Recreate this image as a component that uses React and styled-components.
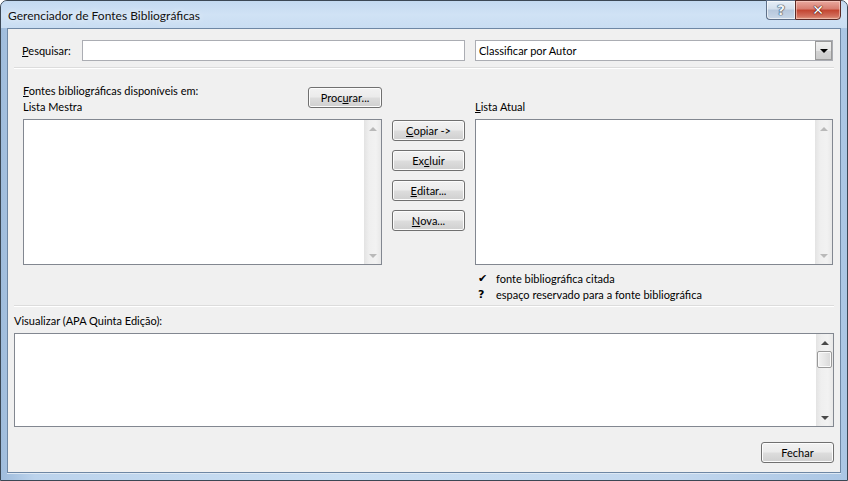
import React from 'react'
import styled, { createGlobalStyle } from 'styled-components'

const GlobalStyle = createGlobalStyle`
    html, body {
        margin: 0;
        padding: 0;
        width: 848px;
        height: 481px;
        overflow: hidden;
        background: #ffffff;
    }
    * {
        box-sizing: border-box;
    }
`

const FONT = `Lato, "Noto Sans", "Liberation Sans", sans-serif`

function App() {
    return (
    <>
        <GlobalStyle />
        <Window>
            <TitleBar>
                <Caption>Gerenciador de Fontes Bibliográficas</Caption>
                <CaptionButtons>
                    <HelpButton>?</HelpButton>
                    <CloseButton>✕</CloseButton>
                </CaptionButtons>
            </TitleBar>
            <Body>
                <SearchRow>
                    <Label><u>P</u>esquisar:</Label>
                    <TextInput />
                    <Combo>
                        <ComboText>Classificar por Autor</ComboText>
                        <ComboButton><Arrow $dir="down" $color="#000" /></ComboButton>
                    </Combo>
                </SearchRow>
                <Separator />
                <Sources>
                    <HeaderLeft>
                        <HeaderText>
                            <Line><u>F</u>ontes bibliográficas disponíveis em:</Line>
                            <Line>Lista Mestra</Line>
                        </HeaderText>
                        <Button $w={74} $top={4}>Proc<u>u</u>rar...</Button>
                    </HeaderLeft>
                    <div />
                    <HeaderRight>
                        <Line><u>L</u>ista Atual</Line>
                    </HeaderRight>

                    <ListBox>
                        <ScrollBar />
                    </ListBox>
                    <ButtonColumn>
                        <Button><u>C</u>opiar -&gt;</Button>
                        <Button>Ex<u>c</u>luir</Button>
                        <Button><u>E</u>ditar...</Button>
                        <Button><u>N</u>ova...</Button>
                    </ButtonColumn>
                    <ListBox>
                        <ScrollBar />
                    </ListBox>

                    <div />
                    <div />
                    <Legend>
                        <LegendRow>
                            <LegendMark>✔</LegendMark>
                            <span>fonte bibliográfica citada</span>
                        </LegendRow>
                        <LegendRow>
                            <LegendMark>?</LegendMark>
                            <span>espaço reservado para a fonte bibliográfica</span>
                        </LegendRow>
                    </Legend>
                </Sources>
                <Separator $top={3} />
                <Preview>
                    <Line>Visualizar (APA Quinta Edição):</Line>
                    <PreviewBox>
                        <ScrollBar $active />
                    </PreviewBox>
                </Preview>
                <Footer>
                    <Button>Fechar</Button>
                </Footer>
            </Body>
        </Window>
    </>
    );
}

function ScrollBar({ $active }) {
    const color = $active ? '#4a4a4a' : '#b9b9b9'
    return (
        <Scroll>
            <ScrollCell><Arrow $dir="up" $color={color} /></ScrollCell>
            {$active && <Thumb />}
            <ScrollTrack />
            <ScrollCell><Arrow $dir="down" $color={color} /></ScrollCell>
        </Scroll>
    )
}

export default App

const Window = styled.div`
    width: 848px;
    height: 481px;
    display: flex;
    flex-direction: column;
    border: 1px solid #3b4754;
    border-radius: 7px 7px 0 0;
    background: linear-gradient(90deg, #9fbcdc 0%, #bcd3ec 4%, #cadff3 40%, #c2d7ee 80%, #abc6e4 100%);
    font-family: ${FONT};
    font-size: 11px;
    color: #000;
`

const TitleBar = styled.div`
    height: 27px;
    display: flex;
    align-items: flex-start;
    justify-content: space-between;
    padding: 0 6px 0 7px;
    background: linear-gradient(180deg, #c3d9f0 0%, #d0e2f5 50%, #c9ddf2 100%);
    border-radius: 6px 6px 0 0;
`

const Caption = styled.div`
    padding-top: 7px;
    font-size: 12px;
    color: #111;
    text-shadow: 0 0 6px rgba(255, 255, 255, 0.9);
`

const CaptionButtons = styled.div`
    display: flex;
    margin-top: -1px;
`

const HelpButton = styled.div`
    width: 29px;
    height: 20px;
    display: flex;
    align-items: center;
    justify-content: center;
    border: 1px solid #5e7089;
    border-right: none;
    border-radius: 0 0 0 4px;
    background: linear-gradient(180deg, #e6eef7 0%, #d3dfec 45%, #b6c7dc 50%, #c8d7e8 100%);
    box-shadow: inset 0 0 0 1px rgba(255, 255, 255, 0.6);
    color: #eef3f8;
    font-family: "DejaVu Sans", sans-serif;
    font-weight: bold;
    font-size: 14px;
    text-shadow: 0 0 1px #2d3e52, 0 0 1px #2d3e52, 0 0 1px #2d3e52;
`

const CloseButton = styled.div`
    width: 46px;
    height: 20px;
    display: flex;
    align-items: center;
    justify-content: center;
    border: 1px solid #5a2a26;
    border-radius: 0 0 4px 0;
    background: linear-gradient(180deg, #e9a99f 0%, #d77c6f 45%, #c2432f 50%, #d2705e 85%, #e29c83 100%);
    box-shadow: inset 0 0 0 1px rgba(255, 220, 210, 0.5);
    color: #ffffff;
    font-family: "DejaVu Sans", sans-serif;
    font-weight: bold;
    font-size: 14px;
    text-shadow: 0 0 1px #4a1410, 0 0 1px #4a1410, 0 0 1px #4a1410;
`

const Body = styled.div`
    flex: 1;
    margin: 0 6px 7px 6px;
    border: 1px solid #6e87a4;
    background: #f0f0f0;
    padding: 0 6px 9px 6px;
    display: flex;
    flex-direction: column;
    box-shadow: 0 1px 0 #dde8f4;
`

const SearchRow = styled.div`
    display: flex;
    align-items: center;
    padding: 11px 0 0 8px;
    height: 32px;
`

const Label = styled.div`
    width: 60px;
`

const TextInput = styled.div`
    width: 383px;
    height: 21px;
    border: 1px solid #abadb3;
    background: #fff;
    margin-right: 10px;
`

const Combo = styled.div`
    flex: 1;
    height: 21px;
    display: flex;
    align-items: center;
    border: 1px solid #abadb3;
    background: #fff;
    margin-right: 1px;
`

const ComboText = styled.div`
    flex: 1;
    padding-left: 3px;
`

const ComboButton = styled.div`
    width: 17px;
    height: 19px;
    display: flex;
    align-items: center;
    justify-content: center;
    border: 1px solid #9a9a9a;
    background: linear-gradient(180deg, #f0f0f0 0%, #e6e6e6 50%, #d4d4d4 51%, #cccccc 100%);
`

const Arrow = styled.div`
    width: 0;
    height: 0;
    border-left: 4px solid transparent;
    border-right: 4px solid transparent;
    ${p => p.$dir === 'up'
        ? `border-bottom: 4px solid ${p.$color};`
        : `border-top: 4px solid ${p.$color};`}
`

const Separator = styled.div`
    margin-top: ${p => p.$top ?? 6}px;
    height: 2px;
    border-top: 1px solid #dcdcdc;
    border-bottom: 1px solid #ffffff;
`

const Sources = styled.div`
    display: grid;
    grid-template-columns: 359px 73px 358px;
    column-gap: 10px;
    padding-left: 9px;
`

const HeaderLeft = styled.div`
    display: flex;
    justify-content: space-between;
    align-items: flex-start;
    padding-top: 14px;
    height: 50px;
`

const HeaderText = styled.div`
    display: flex;
    flex-direction: column;
`

const HeaderRight = styled.div`
    display: flex;
    align-items: flex-end;
    padding-bottom: 4px;
`

const Line = styled.div`
    line-height: 16px;
    white-space: nowrap;
`

const Button = styled.div`
    width: ${p => p.$w ?? 73}px;
    height: 21px;
    margin-top: ${p => p.$top ?? 0}px;
    display: flex;
    align-items: center;
    justify-content: center;
    border: 1px solid #707070;
    border-radius: 3px;
    background: linear-gradient(180deg, #f2f2f2 0%, #ebebeb 48%, #dddddd 52%, #cfcfcf 100%);
    box-shadow: inset 0 0 0 1px #fcfcfc;
    white-space: nowrap;
`

const ButtonColumn = styled.div`
    display: flex;
    flex-direction: column;
    gap: 9px;
    padding-top: 1px;
`

const ListBox = styled.div`
    height: 146px;
    border: 1px solid #828790;
    background: #fff;
    display: flex;
    justify-content: flex-end;
`

const Scroll = styled.div`
    width: 17px;
    display: flex;
    flex-direction: column;
    background: linear-gradient(90deg, #e3e3e3 0%, #efefef 30%, #f2f2f2 70%, #e8e8e8 100%);
`

const ScrollCell = styled.div`
    height: 17px;
    display: flex;
    align-items: center;
    justify-content: center;
`

const ScrollTrack = styled.div`
    flex: 1;
`

const Thumb = styled.div`
    height: 17px;
    margin: 0 1px;
    border: 1px solid #999999;
    border-radius: 2px;
    background: linear-gradient(90deg, #f2f2f2 0%, #e6e6e6 50%, #d8d8d8 100%);
    box-shadow: inset 0 0 0 1px #fafafa;
`

const Legend = styled.div`
    padding: 5px 0 0 3px;
    display: flex;
    flex-direction: column;
`

const LegendRow = styled.div`
    display: flex;
    align-items: center;
    height: 16px;
`

const LegendMark = styled.span`
    width: 18px;
    font-family: "DejaVu Sans", sans-serif;
    font-weight: bold;
    font-size: 11px;
`

const Preview = styled.div`
    padding-top: 6px;
    display: flex;
    flex-direction: column;
    gap: 4px;
`

const PreviewBox = styled.div`
    height: 94px;
    border: 1px solid #828790;
    background: #fff;
    display: flex;
    justify-content: flex-end;
`

const Footer = styled.div`
    display: flex;
    justify-content: flex-end;
    margin-top: auto;
`
